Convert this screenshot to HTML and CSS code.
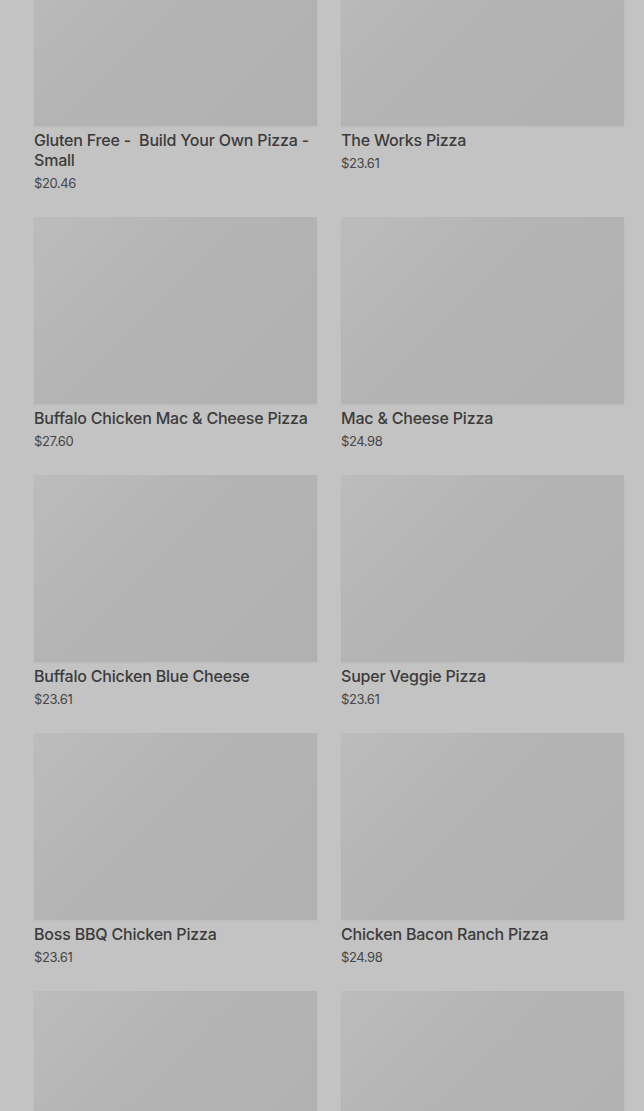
FILE: index.html
```html
<!DOCTYPE html>
<html>
<head>
<meta charset="utf-8">
<link rel="stylesheet" href="styles.css">
</head>
<body>
<main class="page">
  <div class="grid">
    <div class="card"><div class="img"></div><div class="title">Gluten Free -&nbsp; Build Your Own Pizza - Small</div><div class="price">$20.46</div></div>
    <div class="card"><div class="img"></div><div class="title">The Works Pizza</div><div class="price">$23.61</div></div>
    <div class="card"><div class="img"></div><div class="title">Buffalo Chicken Mac &amp; Cheese Pizza</div><div class="price">$27.60</div></div>
    <div class="card"><div class="img"></div><div class="title">Mac &amp; Cheese Pizza</div><div class="price">$24.98</div></div>
    <div class="card"><div class="img"></div><div class="title">Buffalo Chicken Blue Cheese</div><div class="price">$23.61</div></div>
    <div class="card"><div class="img"></div><div class="title">Super Veggie Pizza</div><div class="price">$23.61</div></div>
    <div class="card"><div class="img"></div><div class="title">Boss BBQ Chicken Pizza</div><div class="price">$23.61</div></div>
    <div class="card"><div class="img"></div><div class="title">Chicken Bacon Ranch Pizza</div><div class="price">$24.98</div></div>
    <div class="card"><div class="img"></div></div>
    <div class="card"><div class="img"></div></div>
  </div>
</main>
</body>
</html>
```
FILE: styles.css
```css
html, body {
  margin: 0;
  padding: 0;
  background: #c3c3c3;
  overflow: hidden;
  height: 1111px;
}
.page {
  padding: 0 20px 0 34px;
  margin-top: -61px;
  font-family: Inter, "Noto Sans", sans-serif;
}
.grid {
  display: grid;
  grid-template-columns: 283px 283px;
  column-gap: 24px;
  row-gap: 25px;
  align-items: start;
}
.card {
  display: flex;
  flex-direction: column;
}
.img {
  height: 187px;
  background: linear-gradient(135deg, #bcbcbc 0%, #b4b4b4 40%, #b1b1b1 100%);
  box-shadow: 0 1px 2px rgba(0,0,0,0.04);
}
.title {
  margin-top: 4px;
  font-size: 16px;
  line-height: 20px;
  font-weight: 500;
  color: #3b3b3b;
  letter-spacing: -0.2px;
}
.price {
  margin-top: 4px;
  font-size: 13px;
  line-height: 18px;
  color: #454545;
  letter-spacing: -0.4px;
}
```
